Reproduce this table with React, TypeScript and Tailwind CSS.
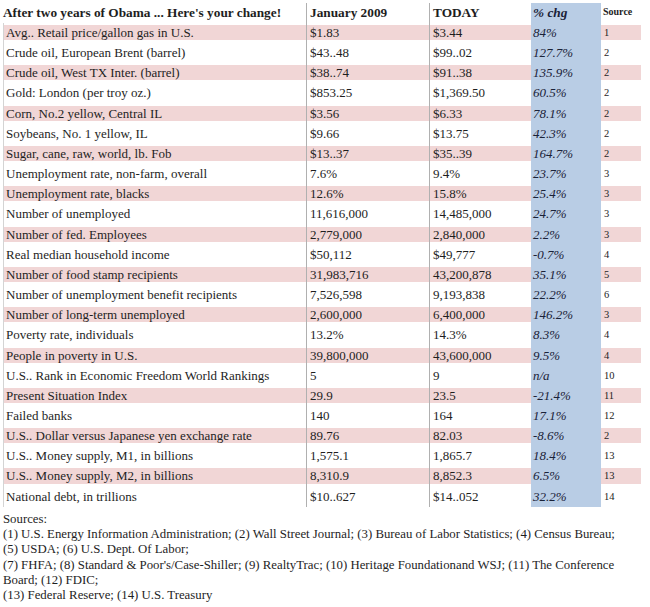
const rows = [
  ["Avg.. Retail price/gallon gas in U.S.", "$1.83", "$3.44", "84%", "1"],
  ["Crude oil, European Brent (barrel)", "$43..48", "$99..02", "127.7%", "2"],
  ["Crude oil, West TX Inter. (barrel)", "$38..74", "$91..38", "135.9%", "2"],
  ["Gold: London (per troy oz.)", "$853.25", "$1,369.50", "60.5%", "2"],
  ["Corn, No.2 yellow, Central IL", "$3.56", "$6.33", "78.1%", "2"],
  ["Soybeans, No. 1 yellow, IL", "$9.66", "$13.75", "42.3%", "2"],
  ["Sugar, cane, raw, world, lb. Fob", "$13..37", "$35..39", "164.7%", "2"],
  ["Unemployment rate, non-farm, overall", "7.6%", "9.4%", "23.7%", "3"],
  ["Unemployment rate, blacks", "12.6%", "15.8%", "25.4%", "3"],
  ["Number of unemployed", "11,616,000", "14,485,000", "24.7%", "3"],
  ["Number of fed. Employees", "2,779,000", "2,840,000", "2.2%", "3"],
  ["Real median household income", "$50,112", "$49,777", "-0.7%", "4"],
  ["Number of food stamp recipients", "31,983,716", "43,200,878", "35.1%", "5"],
  ["Number of unemployment benefit recipients", "7,526,598", "9,193,838", "22.2%", "6"],
  ["Number of long-term unemployed", "2,600,000", "6,400,000", "146.2%", "3"],
  ["Poverty rate, individuals", "13.2%", "14.3%", "8.3%", "4"],
  ["People in poverty in U.S.", "39,800,000", "43,600,000", "9.5%", "4"],
  ["U.S.. Rank in Economic Freedom World Rankings", "5", "9", "n/a", "10"],
  ["Present Situation Index", "29.9", "23.5", "-21.4%", "11"],
  ["Failed banks", "140", "164", "17.1%", "12"],
  ["U.S.. Dollar versus Japanese yen exchange rate", "89.76", "82.03", "-8.6%", "2"],
  ["U.S.. Money supply, M1, in billions", "1,575.1", "1,865.7", "18.4%", "13"],
  ["U.S.. Money supply, M2, in billions", "8,310.9", "8,852.3", "6.5%", "13"],
  ["National debt, in trillions", "$10..627", "$14..052", "32.2%", "14"],
]

export default function App() {
  return (
    <div className="w-[650px] h-[607px] bg-white text-[#1e1e1e] overflow-hidden font-['Liberation_Serif','Times_New_Roman',serif]">
      {/* header */}
      <div className="flex h-[23px] pt-[3px]">
        <div className="w-[306px] pl-[3px] text-[13.3px] font-bold leading-[20px]">After two years of Obama ... Here's your change!</div>
        <div className="w-[123px] border-l border-[#b0b0b0] pl-[3px] text-[13.3px] font-bold leading-[20px]">January 2009</div>
        <div className="w-[102px] border-l border-[#b0b0b0] pl-[3px] text-[13.3px] font-bold leading-[20px]">TODAY</div>
        <div className="w-[70px] bg-[#b9cde5] pl-[2px] text-[13.3px] font-bold italic leading-[20px] text-[#1a2238]">% chg</div>
        <div className="w-[40px] pl-[2px] text-[10px] font-bold leading-[18px]">Source</div>
      </div>

      {rows.map((r, i) => {
        const band = i % 2 === 0 ? "bg-[#f1d6d6] bg-clip-content" : ""
        return (
          <div key={i} className="flex h-[20.17px] text-[13px]">
            <div className={`w-[306px] border-l border-[#d4d4d4] ml-[3px] pt-[2px] pb-[3px] ${band}`}>
              <div className="pl-[2px] leading-[15px]">{r[0]}</div>
            </div>
            <div className={`w-[123px] -ml-[3px] border-l border-[#b0b0b0] pt-[2px] pb-[3px] ${band}`}>
              <div className="pl-[3px] leading-[15px]">{r[1]}</div>
            </div>
            <div className={`w-[102px] border-l border-[#b0b0b0] pt-[2px] pb-[3px] ${band}`}>
              <div className="pl-[3px] leading-[15px]">{r[2]}</div>
            </div>
            <div className="w-[70px] bg-[#b9cde5] pt-[2px] pb-[3px]">
              <div className="pl-[2px] leading-[15px] italic text-[#1a2238]">{r[3]}</div>
            </div>
            <div className={`w-[40px] pt-[2px] pb-[3px] ${band}`}>
              <div className="pl-[3px] leading-[15px] text-[10.5px]">{r[4]}</div>
            </div>
          </div>
        )
      })}

      {/* sources */}
      <div className="pl-[3px] pt-[5px] text-[12.8px] leading-[15.3px]">
        <div>Sources:</div>
        <div>(1) U.S. Energy Information Administration; (2) Wall Street Journal; (3) Bureau of Labor Statistics; (4) Census Bureau;</div>
        <div>(5) USDA; (6) U.S. Dept. Of Labor;</div>
        <div>(7) FHFA; (8) Standard &amp; Poor's/Case-Shiller; (9) RealtyTrac; (10) Heritage Foundationand WSJ; (11) The Conference</div>
        <div>Board; (12) FDIC;</div>
        <div>(13) Federal Reserve; (14) U.S. Treasury</div>
      </div>
    </div>
  )
}
